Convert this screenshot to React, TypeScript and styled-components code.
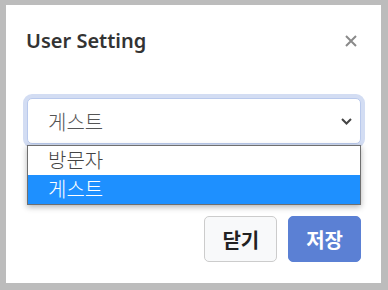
import styled, { createGlobalStyle } from 'styled-components';

const GlobalStyle = createGlobalStyle`
  html, body {
    margin: 0;
    padding: 0;
    background: #bcbcbc;
    font-family: "Noto Sans", "Noto Sans CJK KR", sans-serif;
  }
`;

const options = ['방문자', '게스트'];
const selected = '게스트';

const App = () => (
  <>
    <GlobalStyle />
    <Backdrop>
      <Modal>
        <Header>
          <Title>User Setting</Title>
          <CloseButton aria-label="close">
            <svg width="12" height="12" viewBox="0 0 12 12">
              <path d="M1 1L11 11M11 1L1 11" stroke="#8a8a8a" strokeWidth="2" />
            </svg>
          </CloseButton>
        </Header>
        <Body>
          <Select>
            <SelectValue>{selected}</SelectValue>
            <svg width="11" height="7" viewBox="0 0 11 7">
              <path d="M1 1L5.5 5.5L10 1" stroke="#444" strokeWidth="2" fill="none" />
            </svg>
            <Dropdown>
              {options.map((option) => (
                <Option key={option} $active={option === selected}>{option}</Option>
              ))}
            </Dropdown>
          </Select>
        </Body>
        <Footer>
          <Button>닫기</Button>
          <Button $primary>저장</Button>
        </Footer>
      </Modal>
    </Backdrop>
  </>
);

export default App;

const Backdrop = styled.div`
  padding: 5px 7px 7px 6px;
  height: 290px;
  box-sizing: border-box;
`;

const Modal = styled.div`
  background: #fff;
  height: 278px;
  display: flex;
  flex-direction: column;
`;

const Header = styled.div`
  display: flex;
  align-items: center;
  justify-content: space-between;
  padding: 24px 24px 24px 20px;
`;

const Title = styled.h2`
  margin: 0;
  font-size: 20px;
  line-height: 24px;
  font-weight: 600;
  color: #333;
`;

const CloseButton = styled.div`
  display: flex;
  width: 12px;
  height: 12px;
`;

const Body = styled.div`
  padding: 21px 20px 0 21px;
  flex: 1;
`;

const Select = styled.div`
  position: relative;
  height: 46px;
  box-sizing: border-box;
  display: flex;
  align-items: center;
  justify-content: space-between;
  padding: 0 8px 0 20px;
  border: 1px solid #b9c9ec;
  border-radius: 5px;
  box-shadow: 0 0 0 4px #d3ddf3;
  background: #fff;
`;

const SelectValue = styled.span`
  font-size: 20px;
  font-weight: 300;
  color: #555;
`;

const Dropdown = styled.ul`
  position: absolute;
  top: 46px;
  left: -1px;
  right: -1px;
  margin: 0;
  padding: 0;
  list-style: none;
  background: #fff;
  border: 1px solid #6f6f6f;
  box-shadow: 0 2px 6px rgba(0, 0, 0, 0.3);
`;

const Option = styled.li<{ $active?: boolean }>`
  height: 29px;
  line-height: 29px;
  padding-left: 20px;
  font-size: 20px;
  font-weight: 300;
  color: ${({ $active }) => ($active ? '#fff' : '#444')};
  background: ${({ $active }) => ($active ? '#1e90ff' : '#fff')};
`;

const Footer = styled.div`
  display: flex;
  justify-content: flex-end;
  gap: 11px;
  padding: 0 20px 21px;
`;

const Button = styled.div<{ $primary?: boolean }>`
  height: 46px;
  padding: 0 17px;
  box-sizing: border-box;
  display: flex;
  align-items: center;
  font-size: 20px;
  font-weight: 700;
  border-radius: 5px;
  color: ${({ $primary }) => ($primary ? '#fff' : '#222')};
  background: ${({ $primary }) => ($primary ? '#5b80d4' : '#f8f9fa')};
  border: 1px solid ${({ $primary }) => ($primary ? '#5b80d4' : '#ccc')};
`;
